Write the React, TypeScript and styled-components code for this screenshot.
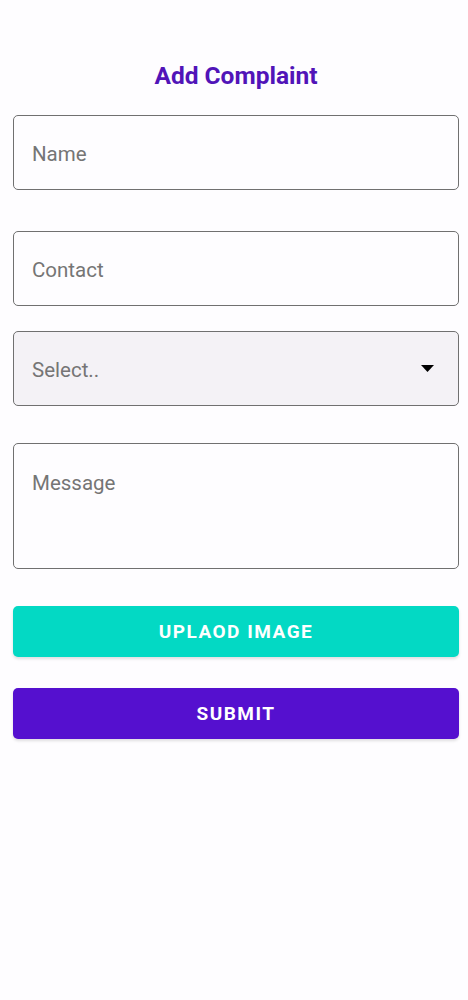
import React from "react";
import styled, { createGlobalStyle } from "styled-components";

const Global = createGlobalStyle`
  html, body { margin: 0; padding: 0; background: #fefdff; }
  body { font-family: Roboto, "Noto Sans", sans-serif; }
  * { box-sizing: border-box; }
`;

const Page = styled.div`
  width: 468px;
  min-height: 1000px;
  background: #fefdff;
  padding: 62px 9px 0 13px;
  display: flex;
  flex-direction: column;
`;

const Title = styled.h1`
  margin: 0 0 25px;
  text-align: center;
  font-size: 24.5px;
  line-height: 28px;
  font-weight: 700;
  color: #5114b8;
`;

const Field = styled.div<{ $h?: number; $gap: number; $bg?: string; $top?: boolean }>`
  height: ${(p) => p.$h ?? 75}px;
  margin-bottom: ${(p) => p.$gap}px;
  border: 1px solid #707070;
  border-radius: 5px;
  background: ${(p) => p.$bg ?? "#fefdff"};
  display: flex;
  align-items: ${(p) => (p.$top ? "flex-start" : "center")};
  justify-content: space-between;
  padding: ${(p) => (p.$top ? "27px 30px 0 18px" : "3px 24px 0 18px")};
`;

const Placeholder = styled.span`
  font-size: 20.5px;
  color: #757575;
  line-height: 24px;
`;

const Caret = styled.svg`
  width: 13px;
  height: 7px;
  display: block;
  margin-top: -3px;
`;

const Button = styled.button<{ $bg: string; $gap: number }>`
  height: 51px;
  margin: 0 0 ${(p) => p.$gap}px;
  border: none;
  border-radius: 5px;
  background: ${(p) => p.$bg};
  color: #ffffff;
  font-family: Roboto, "Noto Sans", sans-serif;
  font-weight: 700;
  font-size: 19px;
  letter-spacing: 1.5px;
  text-transform: uppercase;
  box-shadow: 0 2px 3px rgba(0, 0, 0, 0.12);
  display: flex;
  align-items: center;
  justify-content: center;
  padding: 0;
`;

export default function App() {
  return (
    <>
      <Global />
      <Page>
        <Title>Add Complaint</Title>
        <Field $gap={41}>
          <Placeholder>Name</Placeholder>
        </Field>
        <Field $gap={25}>
          <Placeholder>Contact</Placeholder>
        </Field>
        <Field $gap={37} $bg="#f4f2f6">
          <Placeholder>Select..</Placeholder>
          <Caret viewBox="0 0 13 7">
            <path d="M0 0 L13 0 L6.5 7 Z" fill="#000" />
          </Caret>
        </Field>
        <Field $gap={37} $h={126} $top>
          <Placeholder>Message</Placeholder>
        </Field>
        <Button $bg="#03d9c4" $gap={31}>Uplaod Image</Button>
        <Button $bg="#5510cf" $gap={0}>Submit</Button>
      </Page>
    </>
  );
}
